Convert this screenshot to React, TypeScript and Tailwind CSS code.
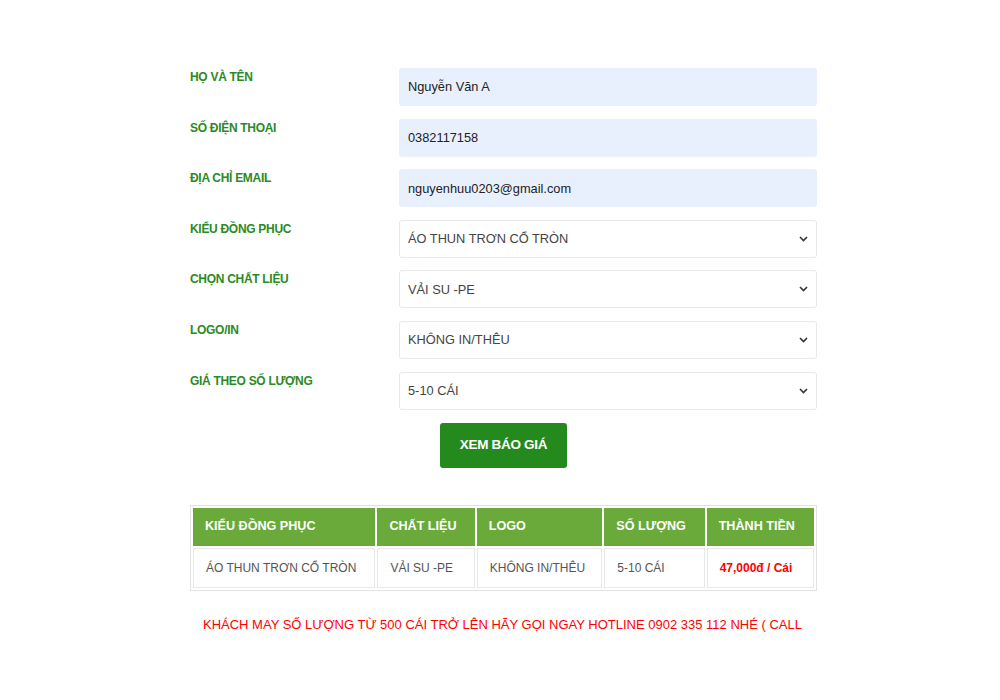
import { type ReactElement } from 'react'

const inputs = [
  { label: 'HỌ VÀ TÊN', value: 'Nguyễn Văn A' },
  { label: 'SỐ ĐIỆN THOẠI', value: '0382117158' },
  { label: 'ĐỊA CHỈ EMAIL', value: 'nguyenhuu0203@gmail.com' }
]

const selects = [
  { label: 'KIỂU ĐỒNG PHỤC', value: 'ÁO THUN TRƠN CỔ TRÒN' },
  { label: 'CHỌN CHẤT LIỆU', value: 'VẢI SU -PE' },
  { label: 'LOGO/IN', value: 'KHÔNG IN/THÊU' },
  { label: 'GIÁ THEO SỐ LƯỢNG', value: '5-10 CÁI' }
]

const columns = [
  { head: 'KIỂU ĐỒNG PHỤC', cell: 'ÁO THUN TRƠN CỔ TRÒN', w: 'w-[183px]' },
  { head: 'CHẤT LIỆU', cell: 'VẢI SU -PE', w: 'w-[98px]' },
  { head: 'LOGO', cell: 'KHÔNG IN/THÊU', w: 'w-[126px]' },
  { head: 'SỐ LƯỢNG', cell: '5-10 CÁI', w: 'w-[101px]' },
  { head: 'THÀNH TIỀN', cell: '47,000đ / Cái', w: 'w-[108px]' }
]

function Chevron (): ReactElement {
  return (
    <svg width="9" height="6" viewBox="0 0 9 6" fill="none">
      <path d="M1 1l3.5 3.5L8 1" stroke="#333" strokeWidth="1.6" />
    </svg>
  )
}

export default function App (): ReactElement {
  return (
    <div className="min-h-[700px] bg-white font-['Liberation_Sans',Arial,sans-serif]">
      <div className="w-[627px] pt-[68px] ml-[190px]">
        <div className="flex flex-col gap-[12.6px]">
          {inputs.map((f) => (
            <div key={f.label} className="flex">
              <div className="w-[209px] text-[12px] font-bold text-[#2b8a25] tracking-[-0.3px]">{f.label}</div>
              <div className="flex h-[38px] flex-1 items-center rounded-[3px] bg-[#e8f0fe] px-[9px] text-[12.8px] text-[#222]">
                {f.value}
              </div>
            </div>
          ))}
          {selects.map((f) => (
            <div key={f.label} className="flex">
              <div className="w-[209px] text-[12px] font-bold text-[#2b8a25] tracking-[-0.3px]">{f.label}</div>
              <div className="flex h-[38px] flex-1 items-center justify-between rounded-[3px] border border-[#e8e8e8] bg-white pl-[8px] pr-[8px] text-[12.8px] text-[#444]">
                <span>{f.value}</span>
                <Chevron />
              </div>
            </div>
          ))}
        </div>

        <div className="mt-[13px] flex">
          <button className="ml-[250px] h-[45px] w-[127px] rounded-[3px] bg-[#258a1e] text-[13.5px] font-bold text-white tracking-[-0.3px]">
            XEM BÁO GIÁ
          </button>
        </div>

        <table className="mt-[37px] w-[627px] border-separate border-spacing-[2px] border border-[#e2e2e2]">
          <thead>
            <tr>
              {columns.map((c) => (
                <th key={c.head} className={`${c.w} h-[38px] whitespace-nowrap bg-[#6aaa3a] px-[12px] text-left font-bold text-[12.6px] text-white`}>
                  {c.head}
                </th>
              ))}
            </tr>
          </thead>
          <tbody>
            <tr>
              {columns.map((c, i) => (
                <td
                  key={c.head}
                  className={i === 4
                    ? 'h-[40px] whitespace-nowrap border border-[#e8e8e8] px-[12px] text-[12px] font-bold text-[#ff0000]'
                    : 'h-[40px] whitespace-nowrap border border-[#e8e8e8] px-[12px] text-[12px] text-[#555]'}
                >
                  {c.cell}
                </td>
              ))}
            </tr>
          </tbody>
        </table>

        <div className="mt-[24px] overflow-hidden whitespace-nowrap pl-[13px] text-[13px] text-[#ff0000]">
          KHÁCH MAY SỐ LƯỢNG TỪ 500 CÁI TRỞ LÊN HÃY GỌI NGAY HOTLINE 0902 335 112 NHÉ ( CALL
        </div>
      </div>
    </div>
  )
}
